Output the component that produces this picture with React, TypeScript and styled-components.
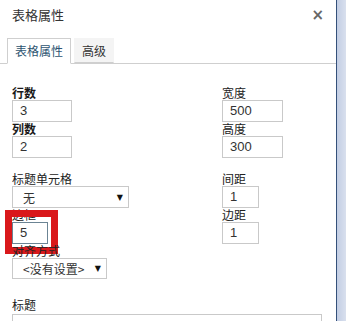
import React from 'react';
import styled, { createGlobalStyle } from 'styled-components';

const GlobalStyle = createGlobalStyle`
  html, body {
    margin: 0;
    padding: 0;
    background: #fff;
  }
  body {
    font-family: "Noto Sans CJK SC", "Liberation Sans", sans-serif;
    color: #333;
  }
`;

const Page = styled.div`
  display: flex;
  align-items: flex-start;
  width: 346px;
  height: 321px;
  overflow: hidden;
`;

const Dialog = styled.div`
  width: 336px;
  flex-shrink: 0;
  background: #fff;
`;

const Edge = styled.div`
  flex: 1;
  align-self: stretch;
  border-left: 1px solid #34507a;
  background: linear-gradient(to right, #c3cee4, #d9e0ee);
`;

const Header = styled.div`
  height: 38px;
  padding: 0 12px;
  display: flex;
  align-items: flex-start;
  justify-content: space-between;
`;

const Title = styled.div`
  font-size: 13px;
  line-height: 30px;
  color: #333;
`;

const Close = styled.span`
  font-family: "DejaVu Sans", sans-serif;
  font-size: 15px;
  font-weight: bold;
  line-height: 30px;
  color: #666;
`;

const TabBar = styled.div`
  display: flex;
  align-items: flex-end;
  gap: 3px;
  height: 25px;
  padding-left: 7px;
  border-bottom: 1px solid #cfcfcf;
`;

const Tab = styled.div<{ $active?: boolean }>`
  box-sizing: border-box;
  padding: 0 7px;
  font-size: 12px;
  line-height: 24px;
  margin-bottom: ${(p) => (p.$active ? '-1px' : '0')};
  height: ${(p) => (p.$active ? '26px' : '25px')};
  color: ${(p) => (p.$active ? '#2e5471' : '#333')};
  background: ${(p) => (p.$active ? '#fff' : '#f4f4f4')};
  border: 1px solid ${(p) => (p.$active ? '#cfcfcf' : '#f4f4f4')};
  border-bottom-color: ${(p) => (p.$active ? '#fff' : '#cfcfcf')};
`;

const Body = styled.div`
  padding: 22px 12px 0;
`;

const Columns = styled.div`
  display: grid;
  grid-template-columns: 210px 1fr;
`;

const Column = styled.div`
  display: flex;
  flex-direction: column;
`;

const Group = styled.div`
  display: flex;
  flex-direction: column;
  & + & {
    margin-top: 14px;
  }
`;

const Field = styled.div`
  position: relative;
  display: flex;
  flex-direction: column;
  align-items: flex-start;
`;

const Label = styled.label<{ $bold?: boolean }>`
  display: block;
  font-size: 12px;
  line-height: 14px;
  height: 14px;
  color: ${(p) => (p.$bold ? '#1a1a1a' : '#222')};
  font-weight: ${(p) => (p.$bold ? 'bold' : 'normal')};
`;

const Input = styled.div<{ $w: number; $dark?: boolean }>`
  width: ${(p) => p.$w}px;
  height: 22px;
  box-sizing: border-box;
  border: 1px solid ${(p) => (p.$dark ? '#6b8494' : '#c9c9c9')};
  padding-left: 7px;
  font-family: "Liberation Sans", sans-serif;
  font-size: 13px;
  line-height: 20px;
  color: #333;
  background: #fff;
`;

const Select = styled.div<{ $w: number; $h: number }>`
  width: ${(p) => p.$w}px;
  height: ${(p) => p.$h}px;
  box-sizing: border-box;
  border: 1px solid #c9c9c9;
  display: flex;
  align-items: center;
  justify-content: space-between;
  padding: 0 5px 0 10px;
  font-size: 12px;
  color: #333;
  background: #fff;
`;

const Arrow = styled.span`
  font-family: "DejaVu Sans", sans-serif;
  font-size: 8px;
  color: #111;
`;

const Marker = styled.div`
  position: absolute;
  left: -7px;
  top: 2px;
  width: 53px;
  height: 44px;
  box-sizing: border-box;
  border: 7px solid #d9181b;
  pointer-events: none;
`;

const CaptionField = styled.div`
  margin-top: 19px;
  display: flex;
  flex-direction: column;
  gap: 2px;
`;

export default function App() {
  return (
    <>
      <GlobalStyle />
      <Page>
        <Dialog>
          <Header>
            <Title>表格属性</Title>
            <Close>×</Close>
          </Header>
          <TabBar>
            <Tab $active>表格属性</Tab>
            <Tab>高级</Tab>
          </TabBar>
          <Body>
            <Columns>
              <Column>
                <Group>
                  <Field>
                    <Label $bold>行数</Label>
                    <Input $w={60}>3</Input>
                  </Field>
                  <Field>
                    <Label $bold>列数</Label>
                    <Input $w={60}>2</Input>
                  </Field>
                </Group>
                <Group>
                  <Field>
                    <Label>标题单元格</Label>
                    <Select $w={117} $h={22}>
                      <span>无</span>
                      <Arrow>▼</Arrow>
                    </Select>
                  </Field>
                  <Field>
                    <Label>边框</Label>
                    <Input $w={36} $dark>5</Input>
                    <Marker />
                  </Field>
                  <Field>
                    <Label>对齐方式</Label>
                    <Select $w={95} $h={21}>
                      <span>&lt;没有设置&gt;</span>
                      <Arrow>▼</Arrow>
                    </Select>
                  </Field>
                </Group>
              </Column>
              <Column>
                <Group>
                  <Field>
                    <Label>宽度</Label>
                    <Input $w={61}>500</Input>
                  </Field>
                  <Field>
                    <Label>高度</Label>
                    <Input $w={61}>300</Input>
                  </Field>
                </Group>
                <Group>
                  <Field>
                    <Label>间距</Label>
                    <Input $w={37}>1</Input>
                  </Field>
                  <Field>
                    <Label>边距</Label>
                    <Input $w={37}>1</Input>
                  </Field>
                </Group>
              </Column>
            </Columns>
            <CaptionField>
              <Label>标题</Label>
              <Input $w={310} />
            </CaptionField>
          </Body>
        </Dialog>
        <Edge />
      </Page>
    </>
  );
}
